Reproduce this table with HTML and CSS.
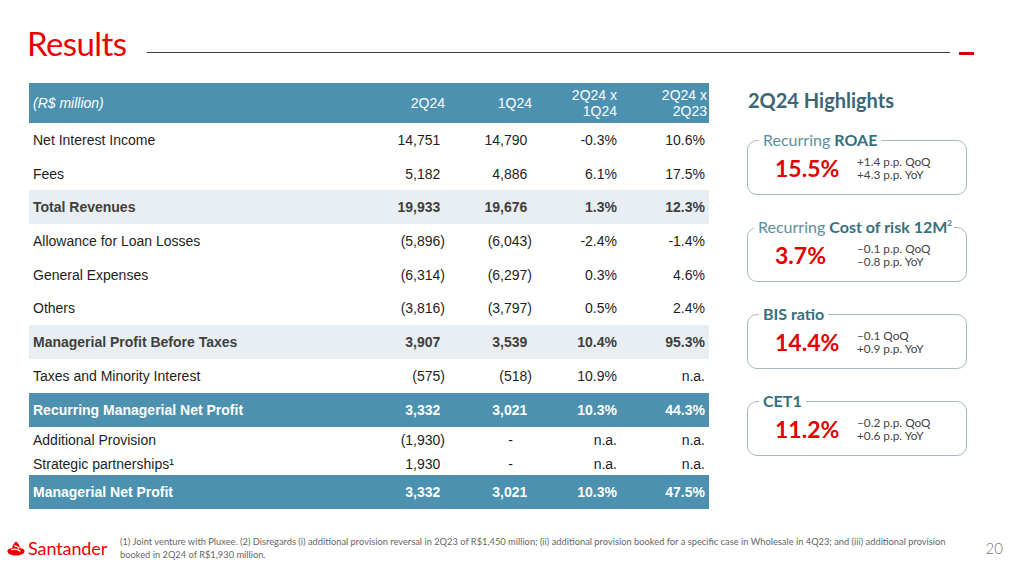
FILE: index.html
```html
<!DOCTYPE html>
<html lang="en">
<head>
<meta charset="utf-8">
<title>Results</title>
<link rel="stylesheet" href="styles.css">
</head>
<body>
<div class="slide">
  <header class="top">
    <h1 class="title">Results</h1>
    <span class="rule"></span>
    <span class="dash"></span>
  </header>

  <main class="content">
    <table class="results">
      <colgroup>
        <col class="c-label"><col class="c-q1"><col class="c-q2"><col class="c-p1"><col class="c-p2">
      </colgroup>
      <thead>
        <tr class="head">
          <th class="label unit">(R$ million)</th>
          <th class="num">2Q24</th>
          <th class="num">1Q24</th>
          <th class="num">2Q24 x<br>1Q24</th>
          <th class="num">2Q24 x<br>2Q23</th>
        </tr>
      </thead>
      <tbody>
        <tr class="r34">
          <td class="label">Net Interest Income</td>
          <td class="num pos">14,751</td><td class="num pos">14,790</td><td class="num">-0.3%</td><td class="num">10.6%</td>
        </tr>
        <tr class="r33">
          <td class="label">Fees</td>
          <td class="num pos">5,182</td><td class="num pos">4,886</td><td class="num">6.1%</td><td class="num">17.5%</td>
        </tr>
        <tr class="r34 sub">
          <td class="label">Total Revenues</td>
          <td class="num pos">19,933</td><td class="num pos">19,676</td><td class="num">1.3%</td><td class="num">12.3%</td>
        </tr>
        <tr class="r34">
          <td class="label">Allowance for Loan Losses</td>
          <td class="num">(5,896)</td><td class="num">(6,043)</td><td class="num">-2.4%</td><td class="num">-1.4%</td>
        </tr>
        <tr class="r33">
          <td class="label">General Expenses</td>
          <td class="num">(6,314)</td><td class="num">(6,297)</td><td class="num">0.3%</td><td class="num">4.6%</td>
        </tr>
        <tr class="r34">
          <td class="label">Others</td>
          <td class="num">(3,816)</td><td class="num">(3,797)</td><td class="num">0.5%</td><td class="num">2.4%</td>
        </tr>
        <tr class="r34 sub">
          <td class="label">Managerial Profit Before Taxes</td>
          <td class="num pos">3,907</td><td class="num pos">3,539</td><td class="num">10.4%</td><td class="num">95.3%</td>
        </tr>
        <tr class="r34">
          <td class="label">Taxes and Minority Interest</td>
          <td class="num">(575)</td><td class="num">(518)</td><td class="num">10.9%</td><td class="num">n.a.</td>
        </tr>
        <tr class="r34 total">
          <td class="label">Recurring Managerial Net Profit</td>
          <td class="num pos">3,332</td><td class="num pos">3,021</td><td class="num">10.3%</td><td class="num">44.3%</td>
        </tr>
        <tr class="r25">
          <td class="label">Additional Provision</td>
          <td class="num">(1,930)</td><td class="num nil">-</td><td class="num">n.a.</td><td class="num">n.a.</td>
        </tr>
        <tr class="r23">
          <td class="label">Strategic partnerships¹</td>
          <td class="num pos">1,930</td><td class="num nil">-</td><td class="num">n.a.</td><td class="num">n.a.</td>
        </tr>
        <tr class="r34 total">
          <td class="label">Managerial Net Profit</td>
          <td class="num pos">3,332</td><td class="num pos">3,021</td><td class="num">10.3%</td><td class="num">47.5%</td>
        </tr>
      </tbody>
    </table>

    <aside class="highlights">
      <h2 class="hl-title">2Q24 Highlights</h2>

      <fieldset class="card">
        <legend class="card-label"><span class="lt">Recurring</span> <b>ROAE</b></legend>
        <div class="metric">
          <span class="big">15.5%</span>
          <span class="delta">+1.4 p.p. QoQ<br>+4.3 p.p. YoY</span>
        </div>
      </fieldset>

      <fieldset class="card">
        <legend class="card-label wide"><span class="lt">Recurring</span> <b>Cost of risk 12M<sup>2</sup></b></legend>
        <div class="metric">
          <span class="big">3.7%</span>
          <span class="delta">–0.1 p.p. QoQ<br>–0.8 p.p. YoY</span>
        </div>
      </fieldset>

      <fieldset class="card">
        <legend class="card-label"><b>BIS ratio</b></legend>
        <div class="metric">
          <span class="big">14.4%</span>
          <span class="delta">–0.1 QoQ<br>+0.9 p.p. YoY</span>
        </div>
      </fieldset>

      <fieldset class="card">
        <legend class="card-label"><b>CET1</b></legend>
        <div class="metric">
          <span class="big">11.2%</span>
          <span class="delta">–0.2 p.p. QoQ<br>+0.6 p.p. YoY</span>
        </div>
      </fieldset>
    </aside>
  </main>

  <footer class="foot">
    <div class="logo">
      <svg class="flame" viewBox="0 0 18 15" width="18" height="15" aria-hidden="true">
        <path d="M9 0.3 C11.2 2.6 13.1 4.6 12.7 7.1 C15.6 7.5 17.6 8.5 17.6 10.1 C17.6 12.9 13.8 14.6 9 14.6 C4.2 14.6 0.4 12.9 0.4 10.1 C0.4 8.5 2.4 7.5 5.3 7.1 C5 5 6.8 2.9 9 0.3Z" fill="#ec0000"/>
        <path d="M4.2 8.6 C7.2 7.9 11 8.3 13.4 10.2" stroke="#fff" stroke-width="1.3" fill="none"/>
        <path d="M7.2 4.6 C9.4 5 11.4 6.2 12.3 7.6" stroke="#fff" stroke-width="1.1" fill="none"/>
      </svg>
      <span class="brand">Santander</span>
    </div>
    <p class="note">(1) Joint venture with Pluxee. (2) Disregards (i) additional provision reversal in 2Q23 of R$1,450 million; (ii) additional provision booked for a specific case in Wholesale in 4Q23; and (iii) additional provision<br>booked in 2Q24 of R$1,930 million.</p>
    <span class="page">20</span>
  </footer>
</div>
</body>
</html>
```

FILE: styles.css
```css
* { box-sizing: border-box; }
html, body { margin: 0; padding: 0; background: #fff; }
.slide {
  width: 1017px;
  height: 563px;
  overflow: hidden;
  display: flex;
  flex-direction: column;
  font-family: "Liberation Sans", Arial, sans-serif;
}

/* Header */
.top {
  display: flex;
  align-items: flex-start;
  padding: 27px 43px 0 27px;
}
.title {
  margin: 0 21px 0 0;
  font-family: Lato, "Open Sans", sans-serif;
  font-weight: 400;
  font-size: 33px;
  line-height: 33px;
  color: #ec0000;
  letter-spacing: -0.6px;
}
.rule {
  flex: 1;
  height: 1px;
  margin-top: 25px;
  background: #3a3a3a;
}
.dash {
  width: 15px;
  height: 3px;
  margin: 25px 0 0 9px;
  background: #d40000;
}

/* Content */
.content {
  display: flex;
  align-items: flex-start;
  padding: 23px 0 0 29px;
}
.results {
  width: 680px;
  table-layout: fixed;
  border-collapse: collapse;
  border-spacing: 0;
  font-size: 14px;
  color: #1e1e1e;
}
.c-label { width: 341px; }
.c-q1 { width: 77px; }
.c-q2 { width: 87px; }
.c-p1 { width: 85px; }
.c-p2 { width: 90px; }
.results th, .results td {
  padding: 0 2px 0 0;
  font-weight: 400;
  white-space: nowrap;
}
.results .label { text-align: left; padding-left: 4px; }
.results .num { text-align: right; }
.results td.pos { padding-right: 6.7px; }
.results td.nil { padding-right: 21px; }
.results td:last-child { padding-right: 4px; }
.results th:last-child { padding-right: 2px; }

.head {
  height: 40px;
  background: #4c91af;
  color: #fff;
}
.head th { line-height: 16px; }
.head .unit { font-style: italic; }

.r34 { height: 34px; }
.r33 { height: 33px; }
.r25 { height: 25px; }
.r23 { height: 23px; }

.sub { background: #e8eef2; }
.sub td { font-weight: 700; color: #3f3f3f; }
.total { background: #4c91af; }
.total td { font-weight: 700; color: #fff; }

/* Highlights */
.highlights {
  width: 220px;
  margin-left: 38px;
  padding-top: 7px;
  display: flex;
  flex-direction: column;
  gap: 24px;
  font-family: Lato, "Open Sans", sans-serif;
}
.hl-title {
  margin: 0 0 -2px 1px;
  font-size: 20px;
  line-height: 20px;
  font-weight: 700;
  color: #3b6675;
}
.card {
  margin: 0;
  padding: 0;
  min-width: 0;
  height: 63px;
  border: 1px solid #a9b9bf;
  border-radius: 10px;
}
.card-label {
  margin-left: 11px;
  padding: 0 4px;
  font-size: 16px;
  line-height: 16px;
  color: #3d7888;
  white-space: nowrap;
}
.card-label.wide { margin-left: 6px; padding-right: 2px; }
.card-label .lt { color: #5a909d; font-weight: 400; }
.card-label b { font-weight: 700; color: #35707f; }
.card-label sup { font-size: 8px; line-height: 0; vertical-align: 7px; }
.metric {
  display: flex;
  align-items: center;
  height: 40px;
  padding-left: 27px;
}
.big {
  width: 82px;
  font-size: 23px;
  font-weight: 700;
  color: #e30000;
}
.delta {
  font-size: 11.8px;
  line-height: 13.5px;
  color: #444;
}

/* Footer */
.foot {
  margin-top: auto;
  height: 30px;
  padding: 0 14px 0 7px;
  display: flex;
  align-items: center;
  font-family: Lato, "Open Sans", sans-serif;
}
.logo {
  display: flex;
  align-items: center;
  width: 113px;
  margin-top: 0;
}
.flame { display: block; }
.brand {
  margin-left: 3px;
  font-size: 18px;
  line-height: 18px;
  color: #ec0000;
  letter-spacing: -0.1px;
}
.note {
  margin: 0;
  font-size: 9.3px;
  line-height: 13px;
  color: #666;
  white-space: nowrap;
}
.page {
  margin-left: auto;
  font-size: 15px;
  font-weight: 300;
  color: #777;
}
```
